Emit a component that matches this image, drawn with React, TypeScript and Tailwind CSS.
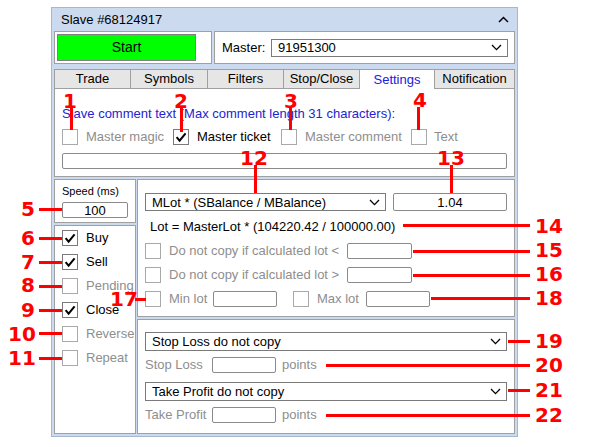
import React from "react";

const ui = "font-['Liberation_Sans',Arial,sans-serif]";

function Check({ checked = false, disabled = false }: { checked?: boolean; disabled?: boolean }) {
  return (
    <span
      className={`flex h-4 w-4 shrink-0 items-center justify-center border bg-white ${
        disabled ? "border-[#a9a9a9]" : "border-[#7a7a7a]"
      }`}
    >
      {checked && (
        <svg width="12" height="12" viewBox="0 0 12 12">
          <path d="M1.6 6.2 L4.6 9.6 L10.6 2.4" fill="none" stroke="#000" strokeWidth="2" />
        </svg>
      )}
    </span>
  );
}

function Chevron() {
  return (
    <svg width="11" height="7" viewBox="0 0 11 7" className="shrink-0">
      <path d="M1 1 L5.5 5.6 L10 1" fill="none" stroke="#000" strokeWidth="1.3" />
    </svg>
  );
}

function Select({ value, className = "" }: { value: string; className?: string }) {
  return (
    <div
      className={`flex items-center justify-between border border-[#7a7a7a] bg-white pl-[6px] pr-[5px] leading-none ${className}`}
    >
      <span>{value}</span>
      <Chevron />
    </div>
  );
}

function Input({ value = "", className = "" }: { value?: string; className?: string }) {
  return (
    <div
      className={`flex items-center justify-center rounded-[2px] border border-[#8a8a8a] bg-white leading-none ${className}`}
    >
      {value}
    </div>
  );
}

const tabs = [
  { label: "Trade", w: "w-[76px]" },
  { label: "Symbols", w: "w-[77px]" },
  { label: "Filters", w: "w-[76px]" },
  { label: "Stop/Close", w: "w-[76px]" },
  { label: "Settings", w: "w-[75px]", active: true },
  { label: "Notification", w: "w-[81px]", last: true },
];

const trade = [
  { label: "Buy", checked: true },
  { label: "Sell", checked: true },
  { label: "Pending", disabled: true },
  { label: "Close", checked: true },
  { label: "Reverse", disabled: true },
  { label: "Repeat", disabled: true },
];

// red callout numbers (ink centre) and their leader lines
const marks = [
  { n: "1", c: "left-[70px] top-[101px]" },
  { n: "2", c: "left-[181px] top-[101px]" },
  { n: "3", c: "left-[291px] top-[101px]" },
  { n: "4", c: "left-[420px] top-[100px]" },
  { n: "12", c: "left-[254px] top-[158px]" },
  { n: "13", c: "left-[451px] top-[158px]" },
  { n: "5", c: "left-[28px] top-[209px]" },
  { n: "6", c: "left-[28px] top-[238px]" },
  { n: "7", c: "left-[28px] top-[262px]" },
  { n: "8", c: "left-[28px] top-[285px]" },
  { n: "9", c: "left-[28px] top-[310px]" },
  { n: "10", c: "left-[22px] top-[334px]" },
  { n: "11", c: "left-[22px] top-[358px]" },
  { n: "17", c: "left-[124px] top-[299px]" },
  { n: "14", c: "left-[549px] top-[226px]" },
  { n: "15", c: "left-[549px] top-[250px]" },
  { n: "16", c: "left-[549px] top-[274px]" },
  { n: "18", c: "left-[549px] top-[298px]" },
  { n: "19", c: "left-[549px] top-[341px]" },
  { n: "20", c: "left-[549px] top-[365px]" },
  { n: "21", c: "left-[549px] top-[390px]" },
  { n: "22", c: "left-[549px] top-[415px]" },
];

const lines = [
  "left-[70px] top-[107px] w-[3px] h-[23px]",
  "left-[180px] top-[107px] w-[3px] h-[25px]",
  "left-[289px] top-[107px] w-[3px] h-[23px]",
  "left-[417px] top-[107px] w-[3px] h-[23px]",
  "left-[254px] top-[165px] w-[3px] h-[28px]",
  "left-[450px] top-[165px] w-[3px] h-[28px]",
  "left-[39px] top-[208px] w-[23px] h-[3px]",
  "left-[39px] top-[237px] w-[23px] h-[3px]",
  "left-[39px] top-[261px] w-[23px] h-[3px]",
  "left-[39px] top-[285px] w-[23px] h-[3px]",
  "left-[39px] top-[309px] w-[23px] h-[3px]",
  "left-[39px] top-[332px] w-[23px] h-[3px]",
  "left-[39px] top-[357px] w-[23px] h-[3px]",
  "left-[135px] top-[298px] w-[11px] h-[3px]",
  "left-[403px] top-[224px] w-[127px] h-[3px]",
  "left-[413px] top-[250px] w-[117px] h-[3px]",
  "left-[413px] top-[274px] w-[117px] h-[3px]",
  "left-[431px] top-[297px] w-[99px] h-[3px]",
  "left-[508px] top-[340px] w-[22px] h-[3px]",
  "left-[326px] top-[364px] w-[204px] h-[3px]",
  "left-[508px] top-[389px] w-[22px] h-[3px]",
  "left-[326px] top-[414px] w-[204px] h-[3px]",
];

export default function App() {
  return (
    <div className={`relative h-[447px] w-[592px] overflow-hidden bg-white pl-[51px] pt-[7px] text-[13px] text-black ${ui}`}>
      <div className="flex h-[430px] w-[467px] flex-col border border-[#a6b7d0] bg-[#cbdaef] px-[2px] pb-[2px]">
        {/* title bar */}
        <div className="flex h-[23px] items-center justify-between pl-[7px] pr-[6px]">
          <span>Slave #68124917</span>
          <svg width="11" height="7" viewBox="0 0 11 7">
            <path d="M1 6 L5.5 1.4 L10 6" fill="none" stroke="#000" strokeWidth="1.4" />
          </svg>
        </div>

        {/* start / master */}
        <div className="flex h-[33px] gap-[2px]">
          <div className="w-[158px] border border-[#a0a0a0] bg-white p-[2px]">
            <div className="flex h-full w-[139px] items-center justify-center border border-[#7f7f7f] bg-[#00ff00] text-[14px]">
              Start
            </div>
          </div>
          <div className="flex flex-1 items-center border border-[#a0a0a0] bg-white pl-[7px]">
            <span>Master:</span>
            <Select value="91951300" className="ml-auto mr-[6px] h-[18px] w-[237px]" />
          </div>
        </div>

        {/* tabs */}
        <div className="mt-[5px] flex h-[20px]">
          {tabs.map((t) => (
            <div
              key={t.label}
              className={`flex items-center justify-center border-l border-t border-[#a0a0a0] ${t.w} ${
                t.active ? "bg-white text-[#2020dc]" : "border-b bg-[#e6e6e6]"
              } ${t.last ? "border-r" : ""}`}
            >
              {t.label}
            </div>
          ))}
        </div>

        {/* settings tab content */}
        <div className="flex h-[88px] flex-col border-x border-b border-[#a0a0a0] bg-white px-[7px] pt-[17px]">
          <div className="h-[15px] leading-[15px] text-[#2323cf]">
            Slave comment text (Max comment length 31 characters):
          </div>
          <div className="mt-[8px] flex h-4 items-center">
            <div className="flex w-[111px] items-center">
              <Check disabled />
              <span className="ml-[8px] text-[#8e8e8e]">Master magic</span>
            </div>
            <div className="flex w-[108px] items-center">
              <Check checked />
              <span className="ml-[8px]">Master ticket</span>
            </div>
            <div className="flex w-[130px] items-center">
              <Check disabled />
              <span className="ml-[8px] text-[#8e8e8e]">Master comment</span>
            </div>
            <div className="flex items-center">
              <Check disabled />
              <span className="ml-[7px] text-[#8e8e8e]">Text</span>
            </div>
          </div>
          <Input className="mt-[8px] h-[16px] w-full" />
        </div>

        {/* lower panels */}
        <div className="mt-[2px] flex flex-1 gap-[1px]">
          <div className="flex w-[83px] flex-col gap-[2px]">
            <div className="h-[44px] border border-[#a0a0a0] bg-white pl-[7px] pt-[5px]">
              <div className="text-[11px] leading-[13px]">Speed (ms)</div>
              <Input value="100" className="mt-[4px] h-[16px] w-[66px]" />
            </div>
            <div className="flex flex-1 flex-col gap-[8px] border border-[#a0a0a0] bg-white pl-[7px] pt-[4px]">
              {trade.map((r) => (
                <div key={r.label} className="flex h-4 items-center">
                  <Check checked={r.checked} disabled={r.disabled} />
                  <span className={`ml-[8px] ${r.disabled ? "text-[#8e8e8e]" : ""}`}>{r.label}</span>
                </div>
              ))}
            </div>
          </div>

          <div className="flex flex-1 flex-col gap-[2px]">
            <div className="flex h-[138px] flex-col border border-[#a0a0a0] bg-white px-[7px] pt-[13px]">
              <div className="flex">
                <Select value="MLot * (SBalance / MBalance)" className="h-[18px] w-[241px]" />
                <Input value="1.04" className="ml-[7px] h-[18px] w-[114px]" />
              </div>
              <div className="mt-[8px] pl-[5px] leading-[15px]">Lot = MasterLot * (104220.42 / 100000.00)</div>
              <div className="mt-[9px] flex flex-col gap-[8px] text-[#8e8e8e]">
                <div className="flex h-4 items-center">
                  <Check disabled />
                  <span className="ml-[8px] w-[178px]">Do not copy if calculated lot &lt;</span>
                  <Input className="h-[16px] w-[65px]" />
                </div>
                <div className="flex h-4 items-center">
                  <Check disabled />
                  <span className="ml-[8px] w-[178px]">Do not copy if calculated lot &gt;</span>
                  <Input className="h-[16px] w-[65px]" />
                </div>
                <div className="flex h-4 items-center">
                  <Check disabled />
                  <span className="ml-[8px] w-[44px]">Min lot</span>
                  <Input className="h-[16px] w-[64px]" />
                  <span className="ml-[16px]">
                    <Check disabled />
                  </span>
                  <span className="ml-[8px] w-[49px]">Max lot</span>
                  <Input className="h-[16px] w-[64px]" />
                </div>
              </div>
            </div>

            <div className="flex flex-1 flex-col border border-[#a0a0a0] bg-white px-[7px] pt-[12px]">
              <Select value="Stop Loss do not copy" className="h-[19px] w-full" />
              <div className="mt-[6px] flex h-4 items-center text-[#8e8e8e]">
                <span className="w-[67px]">Stop Loss</span>
                <Input className="h-[16px] w-[64px]" />
                <span className="ml-[6px]">points</span>
              </div>
              <Select value="Take Profit do not copy" className="mt-[9px] h-[19px] w-full" />
              <div className="mt-[6px] flex h-4 items-center text-[#8e8e8e]">
                <span className="w-[67px]">Take Profit</span>
                <Input className="h-[16px] w-[64px]" />
                <span className="ml-[6px]">points</span>
              </div>
            </div>
          </div>
        </div>
      </div>

      {/* annotations */}
      {lines.map((c) => (
        <div key={c} className={`absolute bg-[#ff0000] ${c}`} />
      ))}
      {marks.map((m) => (
        <div
          key={m.n}
          className={`absolute -translate-x-1/2 -translate-y-1/2 font-['DejaVu_Sans',Verdana,sans-serif] text-[20px] font-bold leading-none text-[#ff0000] ${m.c}`}
        >
          {m.n}
        </div>
      ))}
    </div>
  );
}
